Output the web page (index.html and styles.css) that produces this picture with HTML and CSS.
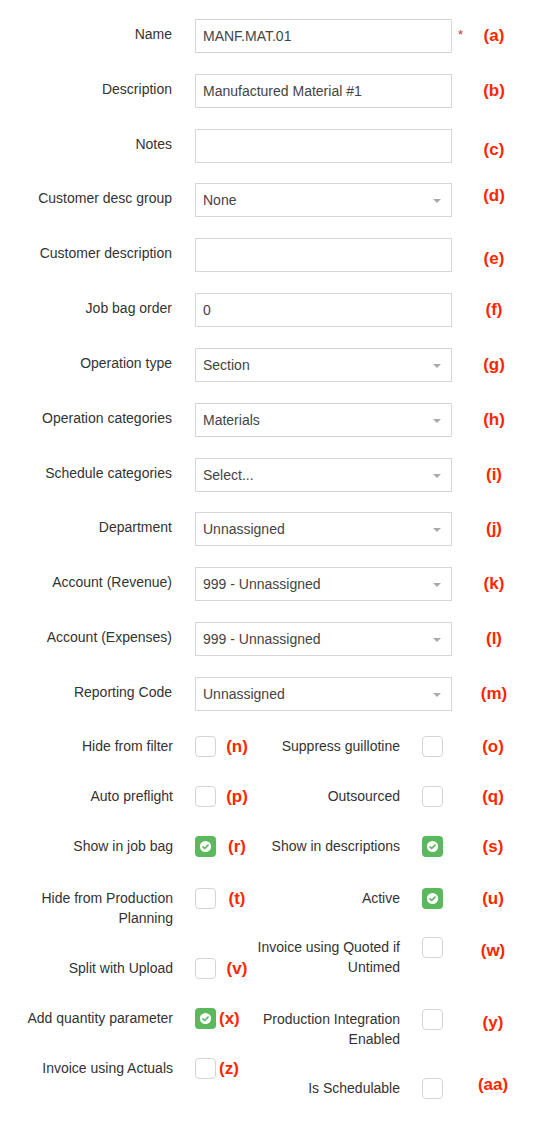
FILE: index.html
```html
<!DOCTYPE html>
<html>
<head>
<meta charset="utf-8">
<link rel="stylesheet" href="styles.css">
</head>
<body>
<form class="form">
  <div class="fields">
    <div class="row">
      <label class="lbl">Name</label>
      <div class="input">MANF.MAT.01</div>
      <span class="req">*</span>
      <span class="ann">(a)</span>
    </div>
    <div class="row">
      <label class="lbl">Description</label>
      <div class="input">Manufactured Material #1</div>
      <span class="req"></span>
      <span class="ann">(b)</span>
    </div>
    <div class="row">
      <label class="lbl">Notes</label>
      <div class="input"></div>
      <span class="req"></span>
      <span class="ann ann-low">(c)</span>
    </div>
    <div class="row">
      <label class="lbl">Customer desc group</label>
      <div class="input select">None<span class="caret"></span></div>
      <span class="req"></span>
      <span class="ann ann-high">(d)</span>
    </div>
    <div class="row">
      <label class="lbl">Customer description</label>
      <div class="input"></div>
      <span class="req"></span>
      <span class="ann ann-low">(e)</span>
    </div>
    <div class="row">
      <label class="lbl">Job bag order</label>
      <div class="input">0</div>
      <span class="req"></span>
      <span class="ann">(f)</span>
    </div>
    <div class="row">
      <label class="lbl">Operation type</label>
      <div class="input select">Section<span class="caret"></span></div>
      <span class="req"></span>
      <span class="ann">(g)</span>
    </div>
    <div class="row">
      <label class="lbl">Operation categories</label>
      <div class="input select">Materials<span class="caret"></span></div>
      <span class="req"></span>
      <span class="ann">(h)</span>
    </div>
    <div class="row">
      <label class="lbl">Schedule categories</label>
      <div class="input select">Select...<span class="caret"></span></div>
      <span class="req"></span>
      <span class="ann">(i)</span>
    </div>
    <div class="row">
      <label class="lbl">Department</label>
      <div class="input select">Unnassigned<span class="caret"></span></div>
      <span class="req"></span>
      <span class="ann">(j)</span>
    </div>
    <div class="row">
      <label class="lbl">Account (Revenue)</label>
      <div class="input select">999 - Unnassigned<span class="caret"></span></div>
      <span class="req"></span>
      <span class="ann">(k)</span>
    </div>
    <div class="row">
      <label class="lbl">Account (Expenses)</label>
      <div class="input select">999 - Unnassigned<span class="caret"></span></div>
      <span class="req"></span>
      <span class="ann">(l)</span>
    </div>
    <div class="row">
      <label class="lbl">Reporting Code</label>
      <div class="input select">Unnassigned<span class="caret"></span></div>
      <span class="req"></span>
      <span class="ann">(m)</span>
    </div>
  </div>

  <div class="checks">
    <div class="col col-left">
      <div class="chk">
        <span class="clbl">Hide from filter</span>
        <span class="box"></span>
        <span class="ann-l">(n)</span>
      </div>
      <div class="chk">
        <span class="clbl">Auto preflight</span>
        <span class="box"></span>
        <span class="ann-l">(p)</span>
      </div>
      <div class="chk">
        <span class="clbl">Show in job bag</span>
        <span class="box on"><svg viewBox="0 0 21 21" width="21" height="21"><circle cx="10.5" cy="10.5" r="5.6" fill="#fff"/><path d="M8 10.9 L9.7 12.5 L13 9.2" fill="none" stroke="#5cb85c" stroke-width="1.7" stroke-linecap="round" stroke-linejoin="round"/></svg></span>
        <span class="ann-l">(r)</span>
      </div>
      <div class="chk mt31">
        <span class="clbl">Hide from Production Planning</span>
        <span class="box"></span>
        <span class="ann-l">(t)</span>
      </div>
      <div class="chk mt30">
        <span class="clbl">Split with Upload</span>
        <span class="box"></span>
        <span class="ann-l">(v)</span>
      </div>
      <div class="chk">
        <span class="clbl">Add quantity parameter</span>
        <span class="box on"><svg viewBox="0 0 21 21" width="21" height="21"><circle cx="10.5" cy="10.5" r="5.6" fill="#fff"/><path d="M8 10.9 L9.7 12.5 L13 9.2" fill="none" stroke="#5cb85c" stroke-width="1.7" stroke-linecap="round" stroke-linejoin="round"/></svg></span>
        <span class="ann-l tight">(x)</span>
      </div>
      <div class="chk">
        <span class="clbl">Invoice using Actuals</span>
        <span class="box"></span>
        <span class="ann-l tight">(z)</span>
      </div>
    </div>

    <div class="col col-right">
      <div class="chk">
        <span class="clbl">Suppress guillotine</span>
        <span class="box"></span>
        <span class="ann-r">(o)</span>
      </div>
      <div class="chk">
        <span class="clbl">Outsourced</span>
        <span class="box"></span>
        <span class="ann-r">(q)</span>
      </div>
      <div class="chk">
        <span class="clbl">Show in descriptions</span>
        <span class="box on"><svg viewBox="0 0 21 21" width="21" height="21"><circle cx="10.5" cy="10.5" r="5.6" fill="#fff"/><path d="M8 10.9 L9.7 12.5 L13 9.2" fill="none" stroke="#5cb85c" stroke-width="1.7" stroke-linecap="round" stroke-linejoin="round"/></svg></span>
        <span class="ann-r">(s)</span>
      </div>
      <div class="chk mt31">
        <span class="clbl">Active</span>
        <span class="box on"><svg viewBox="0 0 21 21" width="21" height="21"><circle cx="10.5" cy="10.5" r="5.6" fill="#fff"/><path d="M8 10.9 L9.7 12.5 L13 9.2" fill="none" stroke="#5cb85c" stroke-width="1.7" stroke-linecap="round" stroke-linejoin="round"/></svg></span>
        <span class="ann-r">(u)</span>
      </div>
      <div class="chk mt28">
        <span class="clbl">Invoice using Quoted if Untimed</span>
        <span class="box"></span>
        <span class="ann-r ann-down">(w)</span>
      </div>
      <div class="chk mt32">
        <span class="clbl">Production Integration Enabled</span>
        <span class="box"></span>
        <span class="ann-r ann-down">(y)</span>
      </div>
      <div class="chk">
        <span class="clbl">Is Schedulable</span>
        <span class="box"></span>
        <span class="ann-r ann-up">(aa)</span>
      </div>
    </div>
  </div>
</form>
</body>
</html>
```

FILE: styles.css
```css
html, body {
  margin: 0;
  padding: 0;
  background: #ffffff;
}

body {
  font-family: "Liberation Sans", Arial, Helvetica, sans-serif;
  font-size: 14px;
  color: #333333;
}

.form {
  padding-top: 19px;
}

.fields {
  display: flex;
  flex-direction: column;
  gap: 20.83px;
}

.row {
  display: flex;
  align-items: flex-start;
  height: 34px;
}

.lbl {
  width: 172px;
  box-sizing: border-box;
  padding-left: 12px;
  padding-top: 5px;
  text-align: right;
  line-height: 20px;
  flex: none;
}

.input {
  position: relative;
  margin-left: 23px;
  width: 257px;
  height: 34px;
  box-sizing: border-box;
  border: 1px solid #d6d6d6;
  padding: 0 7px;
  line-height: 32px;
  color: #444444;
  background: #ffffff;
  flex: none;
}

.caret {
  position: absolute;
  right: 10px;
  top: 15px;
  width: 0;
  height: 0;
  border-left: 4px solid transparent;
  border-right: 4px solid transparent;
  border-top: 4px solid #aaaaaa;
}

.req {
  width: 22px;
  box-sizing: border-box;
  padding-left: 6px;
  padding-top: 8px;
  line-height: 16px;
  font-size: 13px;
  color: #c9302c;
  flex: none;
}

.ann {
  width: 40px;
  text-align: center;
  font-weight: bold;
  font-size: 17px;
  line-height: 34px;
  color: #ff2600;
  flex: none;
}

.ann-low {
  padding-top: 4px;
}

.ann-high {
  margin-top: -4px;
}

.checks {
  display: flex;
  margin-top: 25px;
}

.col {
  display: flex;
  flex-direction: column;
}

.col-left {
  width: 227px;
}

.chk {
  display: flex;
  align-items: flex-start;
  margin-top: 29px;
}

.chk:first-child {
  margin-top: 0;
}

.chk.mt28 { margin-top: 28px; }
.chk.mt30 { margin-top: 30px; }
.chk.mt31 { margin-top: 31px; }
.chk.mt32 { margin-top: 32px; }

.clbl {
  width: 173px;
  box-sizing: border-box;
  padding-left: 12px;
  text-align: right;
  line-height: 20px;
  flex: none;
}

.box {
  display: block;
  margin-left: 22px;
  width: 21px;
  height: 21px;
  box-sizing: border-box;
  border: 1px solid #d4d4d4;
  border-radius: 4px;
  background: #ffffff;
  flex: none;
  overflow: hidden;
}

.box.on {
  border: none;
  background: #5cb85c;
}

.box svg {
  display: block;
}

.ann-l,
.ann-r {
  font-weight: bold;
  font-size: 17px;
  line-height: 21px;
  color: #ff2600;
  flex: none;
}

.ann-l {
  width: 40px;
  margin-left: 1px;
  text-align: center;
}

.ann-l.tight {
  width: auto;
  margin-left: 3px;
  text-align: left;
}

.ann-r {
  width: 40px;
  margin-left: 30px;
  text-align: center;
}

.ann-down {
  margin-top: 3px;
}

.ann-up {
  margin-top: -4px;
}
```
